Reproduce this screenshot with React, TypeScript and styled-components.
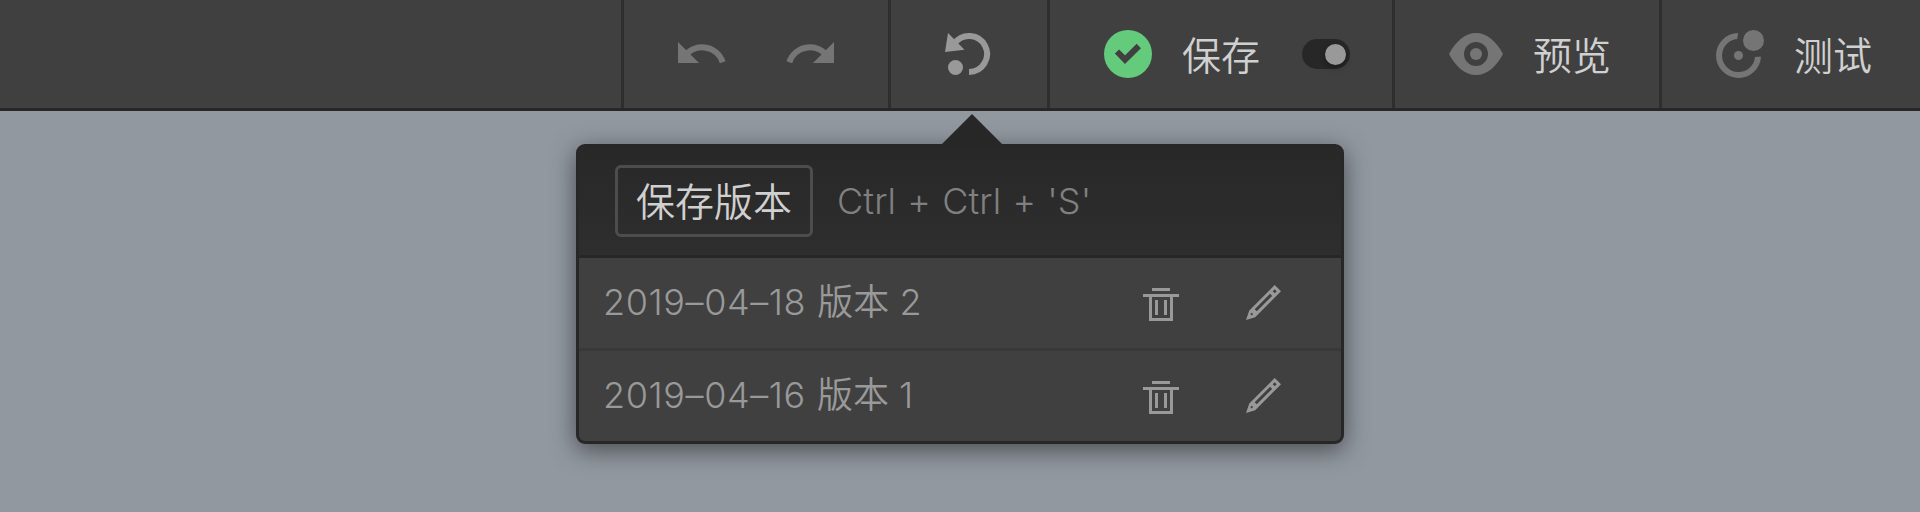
import React from "react";
import styled, { createGlobalStyle } from "styled-components";

const GlobalStyle = createGlobalStyle`
  * { box-sizing: border-box; }
  body {
    margin: 0;
    background: #91989f;
    font-family: Inter, "Noto Sans CJK SC", sans-serif;
    font-weight: 350;
    font-feature-settings: "calt" 0;
    overflow: hidden;
  }
`;

const Page = styled.div`
  width: 1920px;
  height: 512px;
  background: #91989f;
`;

const Toolbar = styled.header`
  display: flex;
  justify-content: flex-end;
  height: 111px;
  background: #404040;
  border-bottom: 3px solid #272727;
`;

const Cell = styled.div<{ $width: number; $pad?: number; $gap?: number }>`
  display: flex;
  align-items: center;
  width: ${(p) => p.$width}px;
  padding-left: ${(p) => p.$pad ?? 0}px;
  gap: ${(p) => p.$gap ?? 0}px;
  border-left: 3px solid #2e2e2e;
`;

const Icon = styled.svg<{ $color: string }>`
  display: block;
  flex: none;
  color: ${(p) => p.$color};
  fill: currentColor;
`;

const Label = styled.span`
  width: 78px;
  padding-top: 3px;
  font-size: 39px;
  line-height: 54px;
  color: #d0d0d0;
  white-space: nowrap;
`;

const Toggle = styled.button`
  display: flex;
  align-items: center;
  justify-content: flex-end;
  width: 48px;
  height: 30px;
  margin-left: 12px;
  padding: 0 4px;
  border: 0;
  border-radius: 15px;
  background: #272727;
`;

const Knob = styled.span`
  width: 21px;
  height: 21px;
  border-radius: 50%;
  background: #999;
  box-shadow: 0 3px 6px rgba(0, 0, 0, 0.3);
`;

const Popover = styled.section`
  position: relative;
  width: 768px;
  height: 300px;
  margin: 33px 0 0 576px;
  border: 3px solid #272727;
  border-radius: 9px;
  background: #404040;
  box-shadow: 0 6px 24px rgba(0, 0, 0, 0.5);
`;

const Pointer = styled.svg`
  position: absolute;
  left: 363px;
  top: -33px;
  fill: #272727;
`;

const PopoverHeader = styled.div`
  display: flex;
  align-items: center;
  gap: 24px;
  height: 111px;
  padding: 0 0 0 36px;
  border-bottom: 3px solid #272727;
  border-radius: 6px 6px 0 0;
  background: linear-gradient(#282828, #2e2e2e);
`;

const SaveButton = styled.button`
  width: 198px;
  height: 72px;
  padding: 2px 0 0;
  border: 3px solid #4d4d4d;
  border-radius: 6px;
  background: transparent;
  color: #d0d0d0;
  font: inherit;
  font-size: 39px;
  line-height: 64px;
`;

const Shortcut = styled.span`
  font-size: 36px;
  font-weight: 300;
  line-height: 54px;
  letter-spacing: 0.1px;
  word-spacing: 1px;
  color: #808080;
  white-space: nowrap;
`;

const Row = styled.div`
  display: flex;
  align-items: center;
  height: 93px;
  padding-left: 24px;
  border-bottom: 3px solid #383838;
  &:last-child {
    height: 90px;
    border-bottom: 0;
  }
`;

const Version = styled.span`
  width: 540px;
  padding-bottom: 8px;
  font-size: 36px;
  color: #999;
  white-space: nowrap;
`;

const VersionDate = styled.span`
  margin-right: 1px;
  letter-spacing: 0.6px;
`;

const Actions = styled.div`
  display: flex;
  align-items: center;
  gap: 66px;
`;

const UndoIcon = ({ flip }: { flip?: boolean }) => (
  <Icon $color="#757575" width="48" height="48" viewBox="678 30 48 48">
    <g transform={flip ? "translate(1404 0) scale(-1 1)" : undefined}>
      <path d="M678 42V63H699Z" />
      <path d="M685.5 55.2A21.6 21.6 0 0 1 722.7 62.2" fill="none" stroke="currentColor" strokeWidth="6" />
    </g>
  </Icon>
);

const RestoreIcon = () => (
  <Icon $color="#999" width="48" height="48" viewBox="945 30 48 48">
    <path d="M948 33L945 52L964.5 49.8Z" />
    <path d="M969 72A18 18 0 1 0 954.5 43.4" fill="none" stroke="currentColor" strokeWidth="6" />
    <circle cx="955.5" cy="67.5" r="7.5" />
  </Icon>
);

const SavedIcon = () => (
  <Icon $color="#64ca7c" width="48" height="48" viewBox="0 0 48 48">
    <circle cx="24" cy="24" r="24" />
    <path d="M13 21.5L21 29.7L34.8 16" fill="none" stroke="#404040" strokeWidth="6" />
  </Icon>
);

const EyeIcon = () => (
  <Icon $color="#757575" width="54" height="42" viewBox="0 0 54 42">
    <path
      fillRule="evenodd"
      d="M0 21C7 8 16 0 27 0S47 8 54 21C47 34 38 42 27 42S7 34 0 21ZM27 9a12 12 0 1 0 0 24a12 12 0 1 0 0-24Z"
    />
    <circle cx="27" cy="21" r="6" />
  </Icon>
);

const TestIcon = () => (
  <Icon $color="#757575" width="48" height="48" viewBox="0 0 48 48">
    <path d="M22.2 6A19.5 19.5 0 1 0 42 26.6" fill="none" stroke="currentColor" strokeWidth="6" />
    <circle cx="37.5" cy="10.5" r="16.5" fill="#404040" />
    <circle cx="22.5" cy="25.5" r="4.5" />
    <circle cx="37.5" cy="10.5" r="10.5" />
  </Icon>
);

const TrashIcon = () => (
  <Icon $color="#999" width="36" height="36" viewBox="0 0 36 36" shapeRendering="crispEdges">
    <path
      fillRule="evenodd"
      d="M9 3h18v3H9zM0 9h36v3H0zM6 12h3v24H6zM27 12h3v24h-3zM9 33h18v3H9zM12 15h3v15h-3zM21 15h3v15h-3z"
    />
  </Icon>
);

const PencilIcon = () => (
  <Icon $color="#999" width="36" height="36" viewBox="0 0 36 36">
    <path
      fillRule="evenodd"
      d="M1 35L4.3 25.5L29.7 0L36 6.3L10.2 32.2ZM9.7 24.2L11.8 26.3L27.2 10.9L25.1 8.8ZM29.7 4.3L27.7 6.3L29.7 8.3L31.7 6.3ZM6.7 27.7L5.3 29.1L6.7 30.5L8.1 29.1Z"
    />
  </Icon>
);

const versions = [
  { date: "2019–04–18", name: "版本 2" },
  { date: "2019–04–16", name: "版本 1" },
];

export default function App() {
  return (
    <Page>
      <GlobalStyle />
      <Toolbar>
        <Cell $width={267} $pad={54} $gap={60}>
          <UndoIcon />
          <UndoIcon flip />
        </Cell>
        <Cell $width={159} $pad={54}>
          <RestoreIcon />
        </Cell>
        <Cell $width={345} $pad={54} $gap={30}>
          <SavedIcon />
          <Label>保存</Label>
          <Toggle aria-label="保存">
            <Knob />
          </Toggle>
        </Cell>
        <Cell $width={267} $pad={54} $gap={30}>
          <EyeIcon />
          <Label>预览</Label>
        </Cell>
        <Cell $width={261} $pad={54} $gap={30}>
          <TestIcon />
          <Label>测试</Label>
        </Cell>
      </Toolbar>
      <Popover>
        <Pointer width="60" height="30" viewBox="0 0 60 30">
          <path d="M30 0L60 30H0Z" />
        </Pointer>
        <PopoverHeader>
          <SaveButton>保存版本</SaveButton>
          <Shortcut>Ctrl + Ctrl + 'S'</Shortcut>
        </PopoverHeader>
        {versions.map((v) => (
          <Row key={v.date}>
            <Version>
              <VersionDate>{v.date}</VersionDate> {v.name}
            </Version>
            <Actions>
              <TrashIcon />
              <PencilIcon />
            </Actions>
          </Row>
        ))}
      </Popover>
    </Page>
  );
}
